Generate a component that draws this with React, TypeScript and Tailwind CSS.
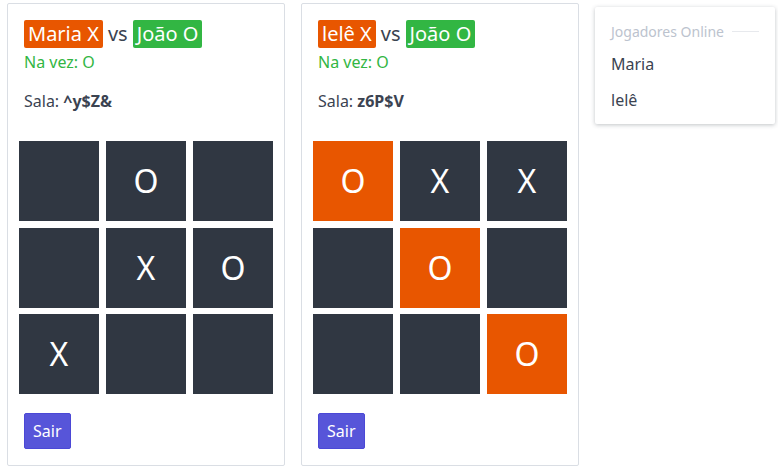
import React from "react";

type Cell = "" | "X" | "O";

const games = [
  {
    p1: "Maria X",
    p2: "João O",
    turn: "O",
    room: "^y$Z&",
    board: ["", "O", "", "", "X", "O", "X", "", ""] as Cell[],
    highlight: [] as number[],
  },
  {
    p1: "lelê X",
    p2: "João O",
    turn: "O",
    room: "z6P$V",
    board: ["O", "X", "X", "", "O", "", "", "", "O"] as Cell[],
    highlight: [0, 4, 8],
  },
];

const GameCard = ({ game }: { game: (typeof games)[number] }) => {
  return (
    <div className="w-[278px] h-[463px] shrink-0 border border-[#dadee4] rounded-[2px] bg-white flex flex-col">
      {/* header */}
      <div className="px-[16px] pt-[16px]">
        <div className="flex items-center h-[28px] text-[20px] text-[#3b4351]">
          <span className="bg-[#e85600] text-white rounded-[2px] px-[4px] leading-[28px]">{game.p1}</span>
          <span className="px-[5px] leading-[28px]">vs</span>
          <span className="bg-[#32b643] text-white rounded-[2px] px-[4px] leading-[28px]">{game.p2}</span>
        </div>
        <div className="text-[#32b643] text-[16px] leading-[28px]">Na vez: {game.turn}</div>
        <div className="mt-[11px] text-[16px] leading-[28px] text-[#3b4351]">
          Sala: <b className="font-bold">{game.room}</b>
        </div>
      </div>

      {/* board */}
      <div className="px-[11px] mt-[26px]">
        <div className="grid grid-cols-3 gap-x-[7px] gap-y-[6.5px]">
          {game.board.map((c, i) => (
            <div
              key={i}
              className={`h-[80px] flex items-center justify-center text-white text-[32px] ${
                game.highlight.includes(i) ? "bg-[#e85600]" : "bg-[#303742]"
              }`}
            >
              {c}
            </div>
          ))}
        </div>
      </div>

      <div className="px-[16px] mt-[19px]">
        <button className="h-[36px] px-[8px] bg-[#5755d9] border border-[#4b48d6] rounded-[2px] text-white text-[16px] leading-[24px]">
          Sair
        </button>
      </div>
    </div>
  );
};

export default function App() {
  return (
    <div
      className="min-h-screen bg-white flex items-start gap-[16px] pl-[7px] pt-[3px]"
      style={{ fontFamily: '"Noto Sans", sans-serif' }}
    >
      {games.map((g, i) => (
        <GameCard key={i} game={g} />
      ))}

      {/* online players */}
      <div className="mt-[4px] w-[180px] bg-white rounded-[2px] shadow-[0_1px_4px_rgba(48,55,66,0.3)] p-[8px]">
        <div className="pt-[4px] pb-[1px] h-[29px] flex items-center px-[8px]">
          <span className="text-[14px] text-[#bcc3ce] pr-[8px] whitespace-nowrap">Jogadores Online</span>
          <div className="flex-1 border-t border-[#e7e9ed]" />
        </div>
        {["Maria", "lelê"].map((n) => (
          <div key={n} className="mt-[4px] px-[8px] py-[4px] text-[16px] leading-[24px] text-[#3b4351]">
            {n}
          </div>
        ))}
      </div>
    </div>
  );
}
